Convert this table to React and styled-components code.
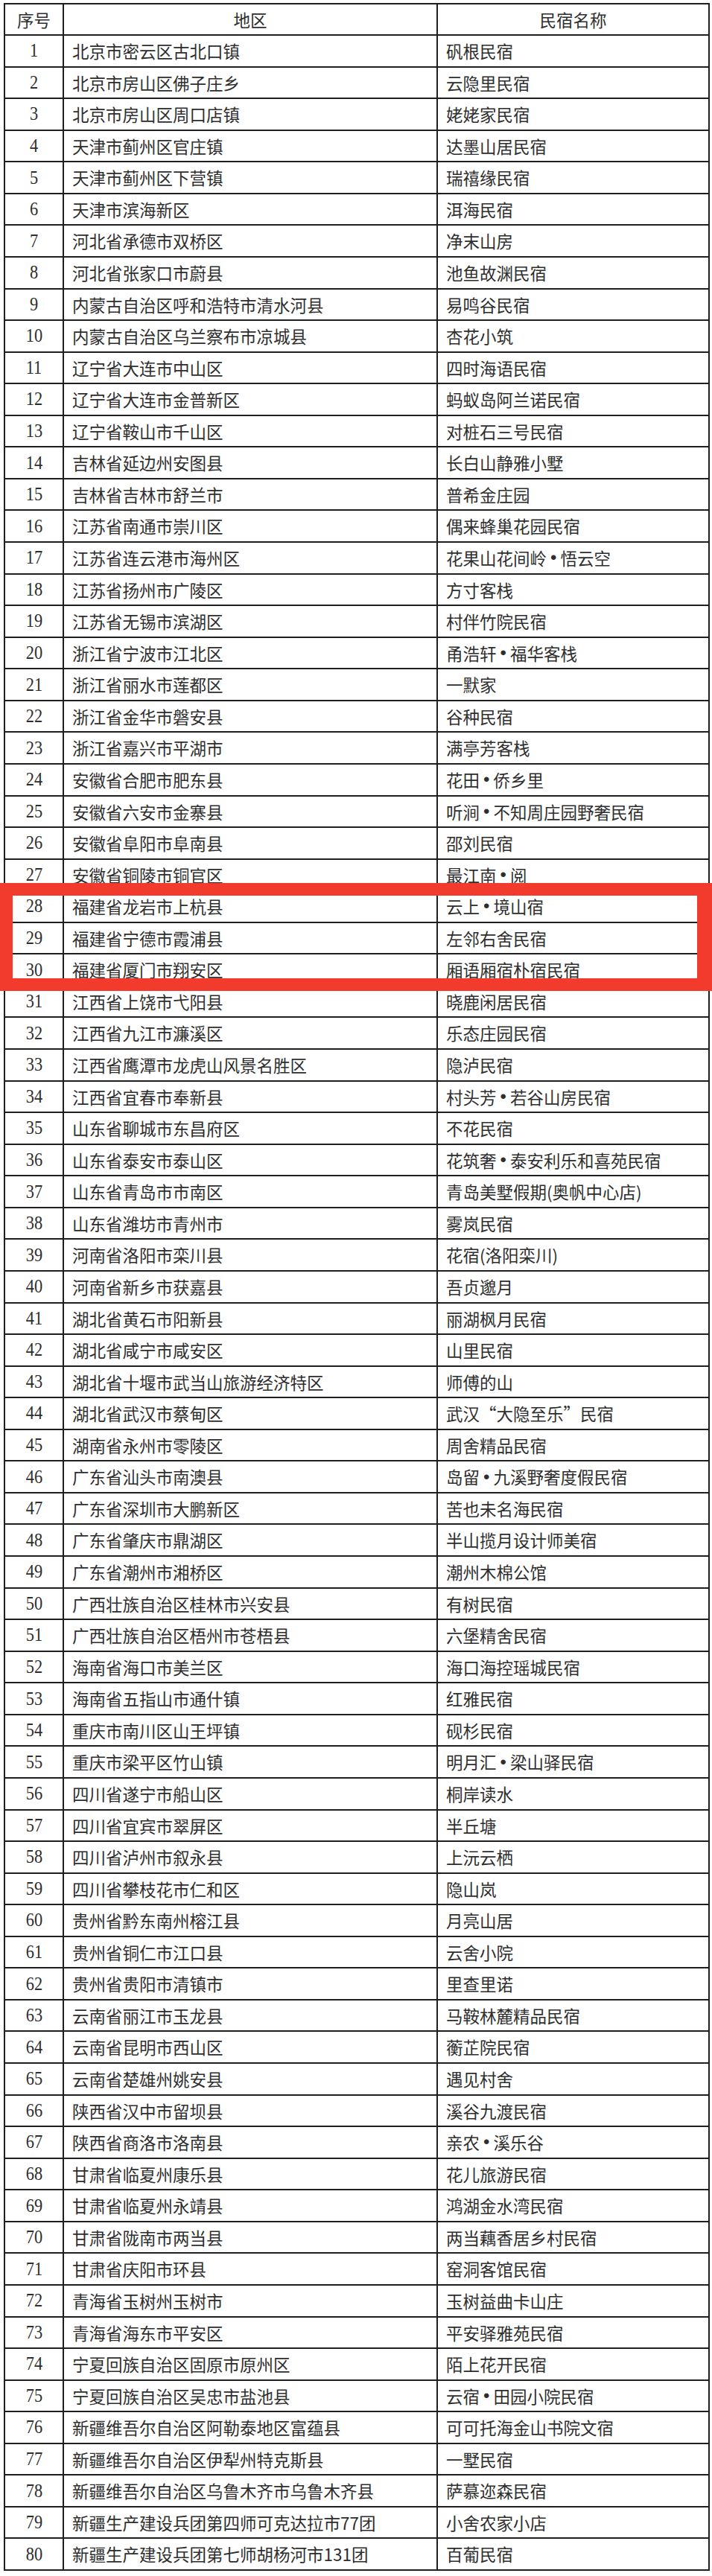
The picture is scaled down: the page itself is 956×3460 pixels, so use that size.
import React from "react";
import styled, { createGlobalStyle } from "styled-components";

const GlobalStyle = createGlobalStyle`
  html, body {
    margin: 0;
    padding: 0;
    background: #ffffff;
  }
  body {
    font-family: "Noto Sans CJK SC", "Noto Sans", sans-serif;
    color: #2e2e2e;
  }
`;

const rows = [
  ["北京市密云区古北口镇", "矾根民宿"],
  ["北京市房山区佛子庄乡", "云隐里民宿"],
  ["北京市房山区周口店镇", "姥姥家民宿"],
  ["天津市蓟州区官庄镇", "达墨山居民宿"],
  ["天津市蓟州区下营镇", "瑞禧缘民宿"],
  ["天津市滨海新区", "洱海民宿"],
  ["河北省承德市双桥区", "净末山房"],
  ["河北省张家口市蔚县", "池鱼故渊民宿"],
  ["内蒙古自治区呼和浩特市清水河县", "易鸣谷民宿"],
  ["内蒙古自治区乌兰察布市凉城县", "杏花小筑"],
  ["辽宁省大连市中山区", "四时海语民宿"],
  ["辽宁省大连市金普新区", "蚂蚁岛阿兰诺民宿"],
  ["辽宁省鞍山市千山区", "对桩石三号民宿"],
  ["吉林省延边州安图县", "长白山静雅小墅"],
  ["吉林省吉林市舒兰市", "普希金庄园"],
  ["江苏省南通市崇川区", "偶来蜂巢花园民宿"],
  ["江苏省连云港市海州区", "花果山花间岭•悟云空"],
  ["江苏省扬州市广陵区", "方寸客栈"],
  ["江苏省无锡市滨湖区", "村伴竹院民宿"],
  ["浙江省宁波市江北区", "甬浩轩•福华客栈"],
  ["浙江省丽水市莲都区", "一默家"],
  ["浙江省金华市磐安县", "谷种民宿"],
  ["浙江省嘉兴市平湖市", "满亭芳客栈"],
  ["安徽省合肥市肥东县", "花田•侨乡里"],
  ["安徽省六安市金寨县", "听涧•不知周庄园野奢民宿"],
  ["安徽省阜阳市阜南县", "邵刘民宿"],
  ["安徽省铜陵市铜官区", "最江南•阅"],
  ["福建省龙岩市上杭县", "云上•境山宿"],
  ["福建省宁德市霞浦县", "左邻右舍民宿"],
  ["福建省厦门市翔安区", "厢语厢宿朴宿民宿"],
  ["江西省上饶市弋阳县", "晓鹿闲居民宿"],
  ["江西省九江市濂溪区", "乐态庄园民宿"],
  ["江西省鹰潭市龙虎山风景名胜区", "隐泸民宿"],
  ["江西省宜春市奉新县", "村头芳•若谷山房民宿"],
  ["山东省聊城市东昌府区", "不花民宿"],
  ["山东省泰安市泰山区", "花筑奢•泰安利乐和喜苑民宿"],
  ["山东省青岛市市南区", "青岛美墅假期(奥帆中心店)"],
  ["山东省潍坊市青州市", "雾岚民宿"],
  ["河南省洛阳市栾川县", "花宿(洛阳栾川)"],
  ["河南省新乡市获嘉县", "吾贞邈月"],
  ["湖北省黄石市阳新县", "丽湖枫月民宿"],
  ["湖北省咸宁市咸安区", "山里民宿"],
  ["湖北省十堰市武当山旅游经济特区", "师傅的山"],
  ["湖北省武汉市蔡甸区", "武汉“大隐至乐”民宿"],
  ["湖南省永州市零陵区", "周舍精品民宿"],
  ["广东省汕头市南澳县", "岛留•九溪野奢度假民宿"],
  ["广东省深圳市大鹏新区", "苦也未名海民宿"],
  ["广东省肇庆市鼎湖区", "半山揽月设计师美宿"],
  ["广东省潮州市湘桥区", "潮州木棉公馆"],
  ["广西壮族自治区桂林市兴安县", "有树民宿"],
  ["广西壮族自治区梧州市苍梧县", "六堡精舍民宿"],
  ["海南省海口市美兰区", "海口海控瑶城民宿"],
  ["海南省五指山市通什镇", "红雅民宿"],
  ["重庆市南川区山王坪镇", "砚杉民宿"],
  ["重庆市梁平区竹山镇", "明月汇•梁山驿民宿"],
  ["四川省遂宁市船山区", "桐岸读水"],
  ["四川省宜宾市翠屏区", "半丘塘"],
  ["四川省泸州市叙永县", "上沅云栖"],
  ["四川省攀枝花市仁和区", "隐山岚"],
  ["贵州省黔东南州榕江县", "月亮山居"],
  ["贵州省铜仁市江口县", "云舍小院"],
  ["贵州省贵阳市清镇市", "里查里诺"],
  ["云南省丽江市玉龙县", "马鞍林麓精品民宿"],
  ["云南省昆明市西山区", "蘅芷院民宿"],
  ["云南省楚雄州姚安县", "遇见村舍"],
  ["陕西省汉中市留坝县", "溪谷九渡民宿"],
  ["陕西省商洛市洛南县", "亲农•溪乐谷"],
  ["甘肃省临夏州康乐县", "花儿旅游民宿"],
  ["甘肃省临夏州永靖县", "鸿湖金水湾民宿"],
  ["甘肃省陇南市两当县", "两当藕香居乡村民宿"],
  ["甘肃省庆阳市环县", "窑洞客馆民宿"],
  ["青海省玉树州玉树市", "玉树益曲卡山庄"],
  ["青海省海东市平安区", "平安驿雅苑民宿"],
  ["宁夏回族自治区固原市原州区", "陌上花开民宿"],
  ["宁夏回族自治区吴忠市盐池县", "云宿•田园小院民宿"],
  ["新疆维吾尔自治区阿勒泰地区富蕴县", "可可托海金山书院文宿"],
  ["新疆维吾尔自治区伊犁州特克斯县", "一墅民宿"],
  ["新疆维吾尔自治区乌鲁木齐市乌鲁木齐县", "萨慕迩森民宿"],
  ["新疆生产建设兵团第四师可克达拉市77团", "小舍农家小店"],
  ["新疆生产建设兵团第七师胡杨河市131团", "百葡民宿"],
];

const Page = styled.div`
  padding: 4px 3px 8px 5px;
  background: #fff;
`;

const Table = styled.div`
  display: flex;
  flex-direction: column;
  border-top: 2px solid #1f1f1f;
  border-left: 2px solid #1f1f1f;
  width: 948px;
  box-sizing: border-box;
`;

const Row = styled.div`
  display: grid;
  grid-template-columns: 79px 502px 1fr;
  height: ${(p) => (p.$header ? "42px" : "42.575px")};
  box-sizing: border-box;
`;

const Cell = styled.div`
  display: flex;
  align-items: center;
  justify-content: ${(p) => (p.$center ? "center" : "flex-start")};
  padding-left: ${(p) => (p.$center ? "0" : "11px")};
  border-right: 2px solid #1f1f1f;
  border-bottom: 2px solid #1f1f1f;
  box-sizing: border-box;
  font-size: 22.5px;
  line-height: 1;
  white-space: nowrap;
  overflow: hidden;
  color: #2e2e2e;
`;

const Num = styled.span`
  display: inline-block;
  font-family: "Liberation Serif", serif;
  font-size: 26px;
  transform: scaleX(0.86);
  color: #2e2e2e;
`;

const Dot = styled.span`
  display: inline-block;
  font-family: "Liberation Sans", sans-serif;
  font-size: 24px;
  margin: 0 5px;
  color: #2e2e2e;
`;

const Highlight = styled.div`
  position: relative;
  display: flex;
  flex-direction: column;
  &::after {
    content: "";
    position: absolute;
    top: -11px;
    bottom: -6px;
    left: -7px;
    right: -3px;
    border: 17px solid #f23a2d;
    border-right-width: 20px;
    pointer-events: none;
  }
`;

function Name({ text }) {
  const parts = text.split("•");
  return (
    <>
      {parts.map((p, i) => (
        <React.Fragment key={i}>
          {i > 0 && <Dot>•</Dot>}
          {p}
        </React.Fragment>
      ))}
    </>
  );
}

function DataRow({ index, region, name }) {
  return (
    <Row>
      <Cell $center>
        <Num>{index}</Num>
      </Cell>
      <Cell>{region}</Cell>
      <Cell>
        <Name text={name} />
      </Cell>
    </Row>
  );
}

export default function App() {
  const before = rows.slice(0, 27);
  const marked = rows.slice(27, 30);
  const after = rows.slice(30);
  return (
    <>
      <GlobalStyle />
      <Page>
        <Table>
          <Row $header>
            <Cell $center>序号</Cell>
            <Cell $center>地区</Cell>
            <Cell $center>民宿名称</Cell>
          </Row>
          {before.map((r, i) => (
            <DataRow key={i} index={i + 1} region={r[0]} name={r[1]} />
          ))}
          <Highlight>
            {marked.map((r, i) => (
              <DataRow key={i} index={i + 28} region={r[0]} name={r[1]} />
            ))}
          </Highlight>
          {after.map((r, i) => (
            <DataRow key={i} index={i + 31} region={r[0]} name={r[1]} />
          ))}
        </Table>
      </Page>
    </>
  );
}
